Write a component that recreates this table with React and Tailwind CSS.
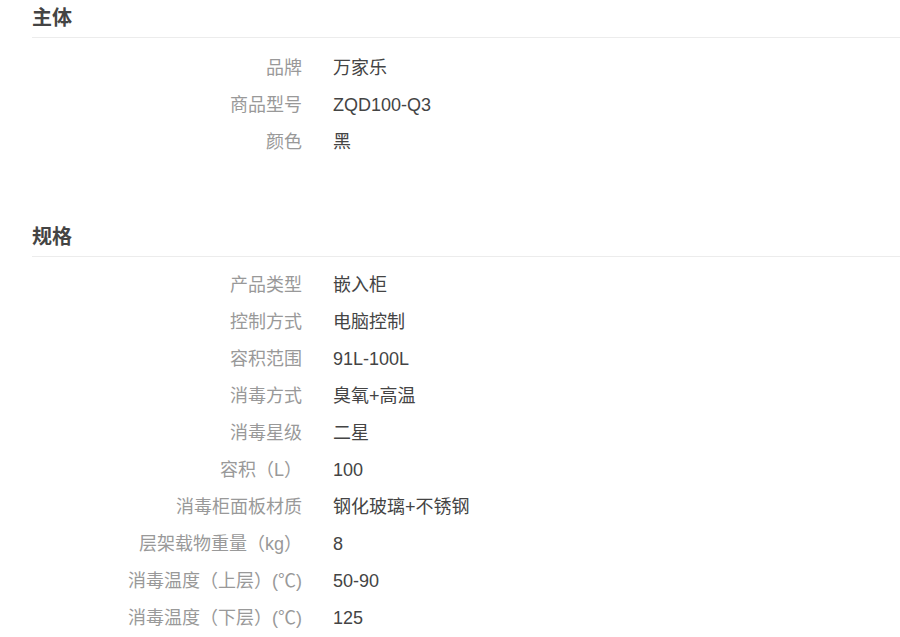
import React from "react";

const sections = [
  {
    title: "主体",
    rows: [
      ["品牌", "万家乐"],
      ["商品型号", "ZQD100-Q3"],
      ["颜色", "黑"],
    ],
  },
  {
    title: "规格",
    rows: [
      ["产品类型", "嵌入柜"],
      ["控制方式", "电脑控制"],
      ["容积范围", "91L-100L"],
      ["消毒方式", "臭氧+高温"],
      ["消毒星级", "二星"],
      ["容积（L）", "100"],
      ["消毒柜面板材质", "钢化玻璃+不锈钢"],
      ["层架载物重量（kg）", "8"],
      ["消毒温度（上层）(℃)", "50-90"],
      ["消毒温度（下层）(℃)", "125"],
    ],
  },
];

export default function App() {
  return (
    <div
      className="w-[900px] h-[637px] overflow-hidden bg-white pl-[32px]"
      style={{ fontFamily: '"Liberation Sans", "Noto Sans CJK SC", sans-serif' }}
    >
      {sections.map((s, i) => (
        <div key={s.title} className={i === 0 ? "" : "mt-[58px]"}>
          <div className="h-[38px] border-b border-[#ececec] flex items-center pb-[2px] text-[20px] font-bold text-[#444]">
            {s.title}
          </div>
          <div className={i === 0 ? "pt-[12px]" : "pt-[10px]"}>
            {s.rows.map(([k, v]) => (
              <div key={k} className="h-[37px] flex items-center text-[18px]">
                <div className="w-[270px] text-right text-[#999] whitespace-nowrap">{k}</div>
                <div className="ml-[31px] text-[#444] whitespace-nowrap">{v}</div>
              </div>
            ))}
          </div>
        </div>
      ))}
    </div>
  );
}
